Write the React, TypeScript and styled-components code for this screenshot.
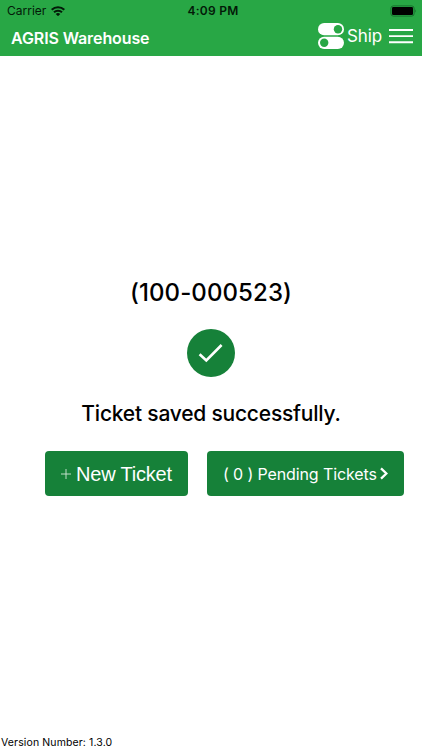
import React from "react";
import styled, { createGlobalStyle } from "styled-components";

const GlobalStyle = createGlobalStyle`
  * { box-sizing: border-box; }
  body { margin: 0; background: #fff; color: #000; font-family: Inter, "Liberation Sans", sans-serif; }
`;

const Screen = styled.div`
  width: 422px;
  height: 750px;
  display: flex;
  flex-direction: column;
  overflow: hidden;
  background: #fff;
`;

const Header = styled.header`
  height: 56px;
  flex: none;
  background: #28a745;
`;

const StatusBar = styled.div`
  height: 22px;
  display: grid;
  grid-template-columns: 1fr auto 1fr;
  align-items: center;
  padding: 0 4px 0 7px;
  font-size: 12px;
  line-height: 22px;
  color: #031a08;
`;

const Carrier = styled.div`
  display: flex;
  align-items: center;
  gap: 5px;
`;

const Clock = styled.div`
  padding-left: 1px;
  font-weight: 600;
  letter-spacing: 0.25px;
`;

const BatterySlot = styled.div`
  display: flex;
  justify-content: flex-end;
`;

const NavBar = styled.div`
  height: 34px;
  display: flex;
  align-items: center;
  justify-content: space-between;
  padding: 0 9px 6px 11px;
  color: #fff;
`;

const Title = styled.h1`
  margin: 4px 0 0;
  font-size: 16px;
  line-height: 24px;
  font-weight: 600;
  letter-spacing: -0.1px;
  white-space: nowrap;
`;

const NavActions = styled.div`
  display: flex;
  align-items: center;
`;

const ModeLabel = styled.span`
  width: 36px;
  margin: 0 6px 0 3px;
  font-size: 17px;
  line-height: 24px;
  letter-spacing: -0.1px;
  white-space: nowrap;
`;

const Main = styled.main`
  flex: 1;
  display: flex;
  flex-direction: column;
  align-items: center;
  padding-top: 221px;
`;

const TicketNumber = styled.h2`
  margin: 0;
  font-size: 24px;
  line-height: 32px;
  font-weight: 500;
  letter-spacing: 0.1px;
  white-space: nowrap;
`;

const Badge = styled.div`
  width: 48px;
  height: 48px;
  margin-top: 20px;
  border-radius: 50%;
  background: #168139;
`;

const Message = styled.h2`
  margin: 21px 0 0;
  font-size: 21px;
  line-height: 32px;
  font-weight: 500;
  letter-spacing: -0.22px;
  white-space: nowrap;
`;

const Actions = styled.div`
  align-self: stretch;
  display: flex;
  gap: 19px;
  margin-top: 21px;
  padding-left: 45px;
`;

const ActionButton = styled.button<{ $width: number }>`
  width: ${(p) => p.$width}px;
  height: 45px;
  display: flex;
  align-items: center;
  padding: 1px 0 0 16px;
  border: 0;
  border-radius: 4px;
  background: #168139;
  color: #fff;
  white-space: nowrap;
`;

const NewLabel = styled.span`
  margin-left: 5px;
  font-family: "Liberation Sans", sans-serif;
  font-size: 20px;
  letter-spacing: -0.2px;
`;

const PendingLabel = styled.span`
  width: 153px;
  margin-right: 4px;
  text-align: left;
  font-family: Inter, sans-serif;
  font-size: 16px;
  letter-spacing: -0.12px;
`;

const Version = styled.footer`
  height: 15px;
  padding-left: 1px;
  font-size: 10.5px;
  line-height: 16px;
  letter-spacing: 0.12px;
`;

const WifiIcon = () => (
  <svg width="14" height="10" viewBox="0 0 14 10" fill="none" stroke="#031a08" strokeWidth="2">
    <path d="M.7 3.8C4.2.4 9.8.4 13.3 3.8M3 6.3C5.2 4.1 8.8 4.1 11 6.3" />
    <path d="M7 10.2 4.7 7.9Q7 6.1 9.3 7.9Z" fill="#031a08" stroke="none" />
  </svg>
);

const BatteryIcon = () => (
  <svg width="28" height="12" viewBox="0 0 28 12">
    <rect x=".9" y=".9" width="23.2" height="10.2" rx="2.4" fill="none" stroke="#16702c" />
    <rect x="2" y="2" width="21" height="8" rx="1.2" fill="#000" />
    <path d="M25.3 4.2Q27 6 25.3 7.8Z" fill="#16702c" />
  </svg>
);

const TogglesIcon = () => (
  <svg width="26" height="26" viewBox="0 0 26 26">
    <rect width="26" height="12.3" rx="6.15" fill="#fff" />
    <circle cx="20" cy="6.2" r="4.2" fill="#28a745" />
    <rect y="13.7" width="26" height="12.3" rx="6.15" fill="#fff" />
    <circle cx="6.2" cy="19.8" r="4.2" fill="#28a745" />
  </svg>
);

const MenuIcon = () => (
  <svg width="24" height="16" viewBox="0 0 24 16" stroke="#fff" strokeWidth="1.9">
    <path d="M0 2H24M0 8.1H24M0 14.3H24" />
  </svg>
);

const CheckIcon = () => (
  <svg width="48" height="48" viewBox="0 0 48 48" fill="none" stroke="#fff" strokeWidth="2.6">
    <path d="M12.6 25.2 19.3 31.5 34.6 16" />
  </svg>
);

const PlusIcon = () => (
  <svg width="10" height="10" viewBox="0 0 10 10" stroke="#d3e7d8" strokeWidth=".9">
    <path d="M0 5H10M5 0V10" />
  </svg>
);

const ChevronIcon = () => (
  <svg width="8" height="14" viewBox="0 0 8 14" fill="none" stroke="#fff" strokeWidth="2.3">
    <path d="M1 1.3 6.4 6.5 1 11.7" />
  </svg>
);

export default function App() {
  return (
    <Screen>
      <GlobalStyle />
      <Header>
        <StatusBar>
          <Carrier>Carrier <WifiIcon /></Carrier>
          <Clock>4:09 PM</Clock>
          <BatterySlot><BatteryIcon /></BatterySlot>
        </StatusBar>
        <NavBar>
          <Title>AGRIS Warehouse</Title>
          <NavActions>
            <TogglesIcon />
            <ModeLabel>Ship</ModeLabel>
            <MenuIcon />
          </NavActions>
        </NavBar>
      </Header>
      <Main>
        <TicketNumber>(100-000523)</TicketNumber>
        <Badge><CheckIcon /></Badge>
        <Message>Ticket saved successfully.</Message>
        <Actions>
          <ActionButton $width={143}>
            <PlusIcon />
            <NewLabel>New Ticket</NewLabel>
          </ActionButton>
          <ActionButton $width={197}>
            <PendingLabel>( 0 ) Pending Tickets</PendingLabel>
            <ChevronIcon />
          </ActionButton>
        </Actions>
      </Main>
      <Version>Version Number: 1.3.0</Version>
    </Screen>
  );
}
